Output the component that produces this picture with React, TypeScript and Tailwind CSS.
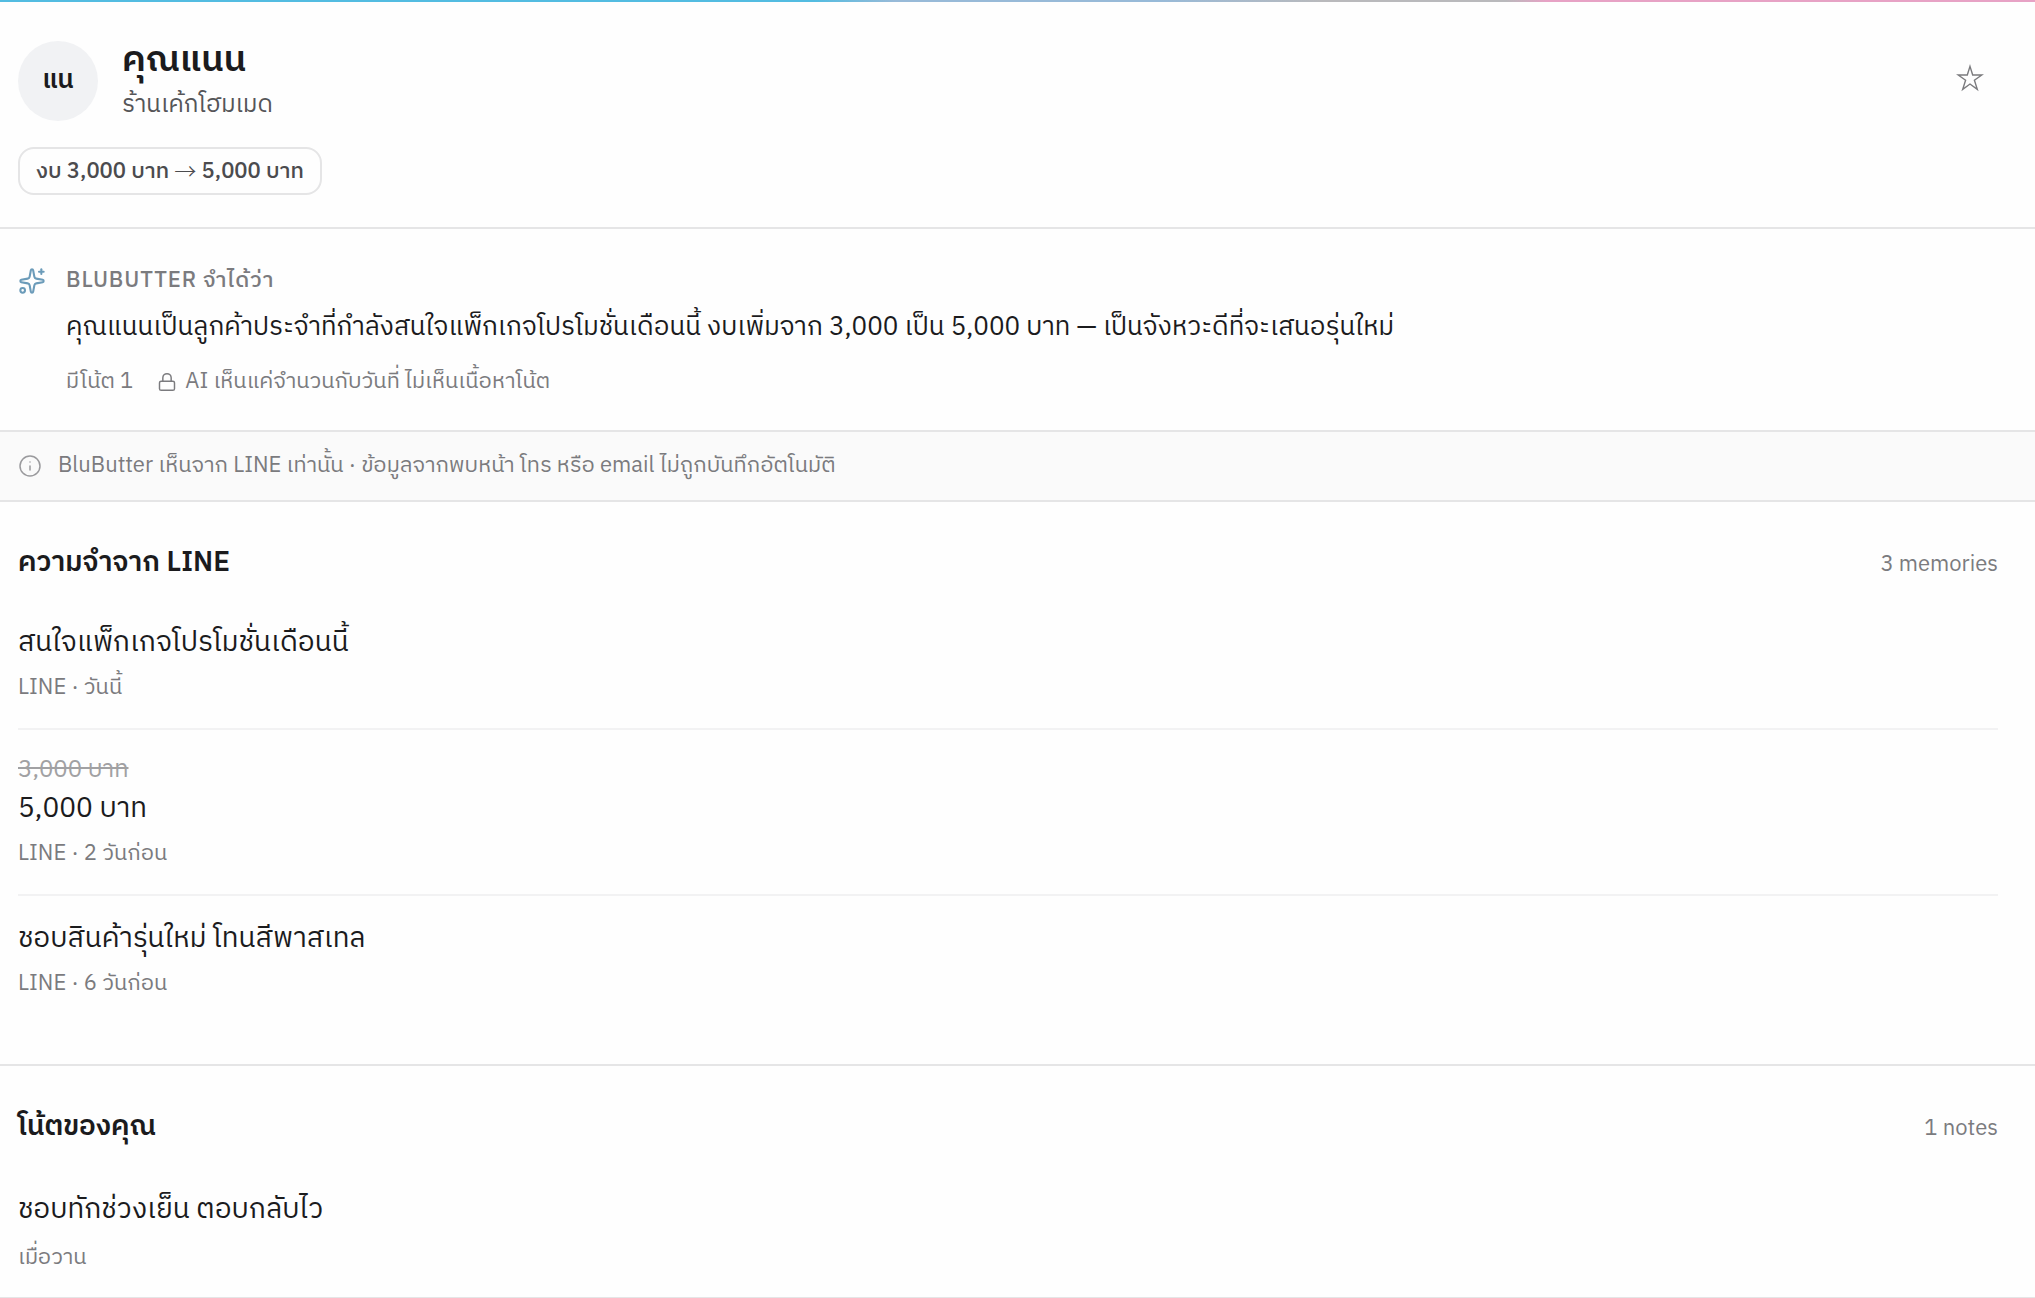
import { Info, Lock, Sparkles } from "lucide-react";

type Memory = { old?: string; text: string; meta: string };

const memories: Memory[] = [
  { text: "สนใจแพ็กเกจโปรโมชั่นเดือนนี้", meta: "LINE · วันนี้" },
  { old: "3,000 บาท", text: "5,000 บาท", meta: "LINE · 2 วันก่อน" },
  { text: "ชอบสินค้ารุ่นใหม่ โทนสีพาสเทล", meta: "LINE · 6 วันก่อน" },
];

function SectionTitle({ title, count }: { title: string; count: string }) {
  return (
    <div className="flex items-baseline justify-between leading-[40px]">
      <h2 className="text-[28px] font-semibold">{title}</h2>
      <span className="text-[22px] text-[#7b7b7e]">{count}</span>
    </div>
  );
}

export default function App() {
  return (
    <main className="h-[1298px] overflow-hidden bg-[#fefefe] font-['IBM_Plex_Sans_Thai','IBM_Plex_Sans','Noto_Sans',sans-serif] text-[#1b1b1d]">
      <div className="h-[2px] bg-[linear-gradient(90deg,#53bce1_40%,#98bad8_44%,#98bad8_57%,#b9b9bc_65%,#b9b9bc_74%,#e7a2c5_76%)]" />
      <header className="h-[227px] border-b-2 border-[#e5e5e6] pt-[39px] pr-[37px] pl-[18px]">
        <div className="flex h-20 items-center">
          <div className="flex size-20 items-center justify-center rounded-full bg-[#f1f2f4] pb-px text-[26px] font-semibold">แน</div>
          <div className="ml-6 flex-1">
            <h1 className="text-[36px] leading-[44px] font-semibold">คุณแนน</h1>
            <p className="mt-1 text-[24px] leading-[36px] text-[#555558]">ร้านเค้กโฮมเมด</p>
          </div>
          <svg className="mr-[14px] mb-[6px] size-[28px] text-[#7b7b7e]" viewBox="0 0 28 28" fill="none" stroke="currentColor" strokeWidth="1.4">
            <path d="M14 2.4 16.7 11H25.8L18.4 16.3 21.3 25.4 14 20 6.7 25.4 9.6 16.3 2.2 11H11.3Z" />
          </svg>
        </div>
        <div className="mt-[26px] inline-flex h-12 items-center rounded-[16px] border-2 border-[#e5e5e6] px-4 text-[22px] font-medium text-[#4b4b4e]">
          <span>
            งบ 3,000 บาท <span className="align-[-1px] font-['Noto_Sans_CJK_JP',sans-serif] leading-none font-light">→</span> 5,000 บาท
          </span>
        </div>
      </header>
      <section className="flex h-[203px] border-b-2 border-[#e5e5e6] pt-[36px] pl-[18px]">
        <Sparkles className="mt-[2px] size-7 text-[#6b9bb9]" strokeWidth={1.75} />
        <div className="ml-5">
          <p className="text-[22px] leading-[32px] font-medium tracking-[0.88px] text-[#7b7b7e]">BLUBUTTER จำได้ว่า</p>
          <p className="mt-[9px] text-[26px] leading-[44px]">
            คุณแนนเป็นลูกค้าประจำที่กำลังสนใจแพ็กเกจโปรโมชั่นเดือนนี้ งบเพิ่มจาก 3,000 เป็น 5,000 บาท — เป็นจังหวะดีที่จะเสนอรุ่นใหม่
          </p>
          <p className="mt-4 flex items-center text-[22px] leading-[32px] text-[#7b7b7e]">
            <span>มีโน้ต 1</span>
            <Lock className="ml-6 size-5" strokeWidth={1.75} />
            <span className="ml-2">AI เห็นแค่จำนวนกับวันที่ ไม่เห็นเนื้อหาโน้ต</span>
          </p>
        </div>
      </section>
      <section className="flex h-[70px] items-center border-b-2 border-[#e5e5e6] bg-[#fafafa] pl-[18px] text-[22px] text-[#7b7b7e]">
        <Info className="size-6 text-[#9a9a9d]" strokeWidth={1.5} />
        <span className="ml-4 pb-0.5">BluButter เห็นจาก LINE เท่านั้น · ข้อมูลจากพบหน้า โทร หรือ email ไม่ถูกบันทึกอัตโนมัติ</span>
      </section>
      <section className="h-[564px] border-b-2 border-[#e5e5e6] pt-[41px] pr-[37px] pl-[18px]">
        <SectionTitle title="ความจำจาก LINE" count="3 memories" />
        <ul className="mt-[15px] divide-y-2 divide-[#f2f2f3]">
          {memories.map((m) => (
            <li key={m.meta} className="pt-[22px] pb-[22px]">
              {m.old && <p className="text-[24px] leading-[36px] text-[#a1a1a3] line-through">{m.old}</p>}
              <p className="text-[28px] leading-[42px]">{m.text}</p>
              <p className="mt-1.5 text-[22px] leading-[36px] text-[#7b7b7e]">{m.meta}</p>
            </li>
          ))}
        </ul>
      </section>
      <section className="h-[233px] border-b-2 border-[#e5e5e6] pt-[41px] pr-[37px] pl-[18px]">
        <SectionTitle title="โน้ตของคุณ" count="1 notes" />
        <p className="mt-10 text-[28px] leading-[42px]">ชอบทักช่วงเย็น ตอบกลับไว</p>
        <p className="mt-[9px] text-[22px] leading-[36px] text-[#7b7b7e]">เมื่อวาน</p>
      </section>
    </main>
  );
}
